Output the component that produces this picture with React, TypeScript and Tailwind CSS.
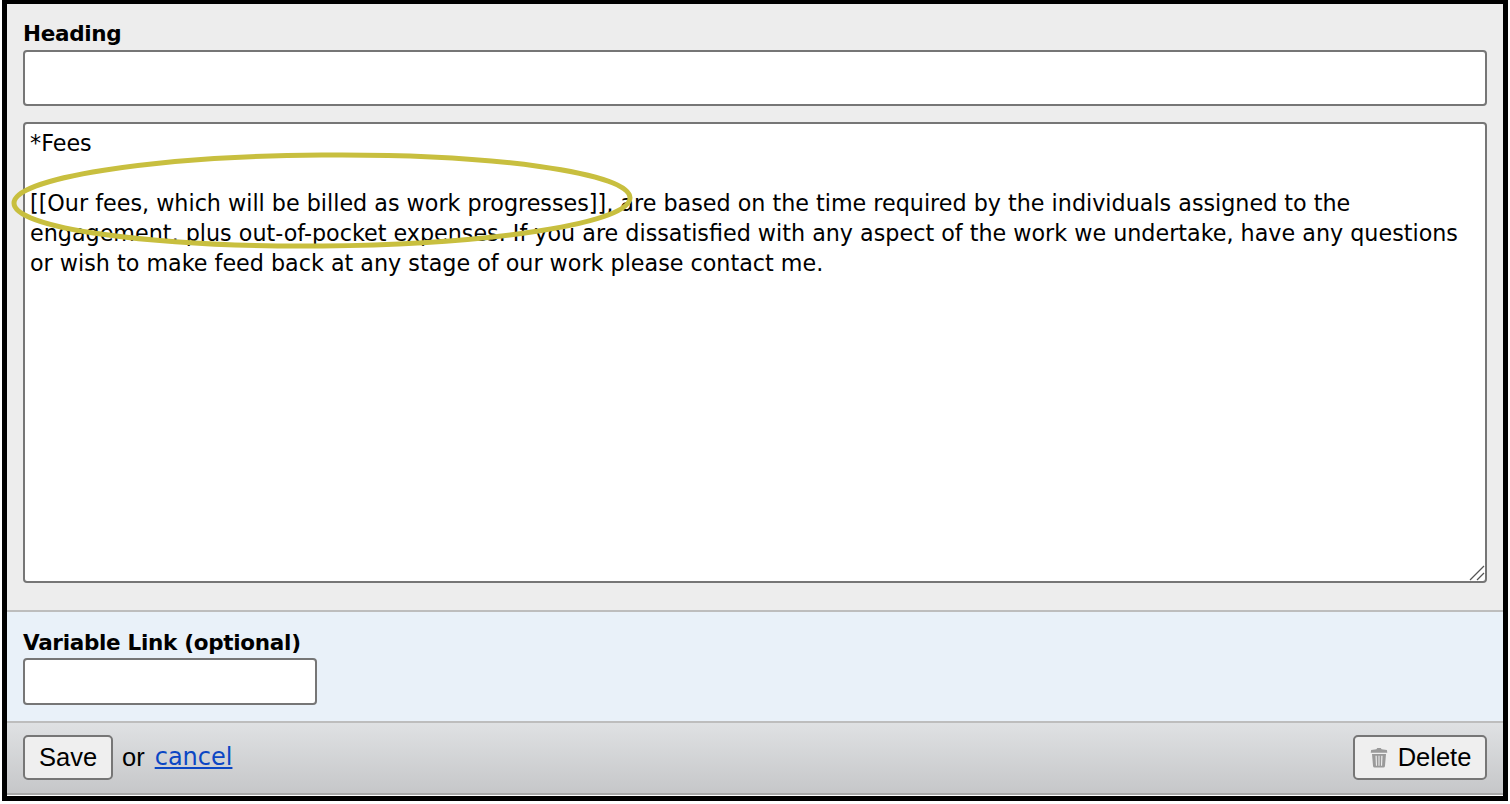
export default function App() {
  return (
    <div className="relative h-[804px] w-[1510px] overflow-hidden bg-white pb-[3px] pl-[2px] pr-[2px] font-['DejaVu_Sans',sans-serif] text-black">
      <div className="flex h-full flex-col border-[5px] border-t-[4px] border-black">
        {/* Main fields */}
        <div className="h-[608px] border-b-2 border-[#bdbdbd] bg-[#ededed] px-[16px] pt-[14px]">
          <label className="block text-[21.5px] leading-[32px] font-bold tracking-[-0.3px]">Heading</label>
          <input className="block h-[56px] w-[1464px] rounded-[4px] border-2 border-[#767676] bg-white" />
          <div className="relative mt-[16px] h-[461px] w-[1464px] rounded-[4px] border-2 border-[#767676] bg-white px-[5px] pt-[4px] text-[22.25px] leading-[30px]">
            <p>*Fees</p>
            <p className="mt-[30px]">
              [[Our fees, which will be billed as work progresses]], are based on the time required by the individuals assigned to the engagement, plus out-of-pocket expenses. If you are dissatisfied with any aspect of the work we undertake, have any questions or wish to make feed back at any stage of our work please contact me.
            </p>
            <svg className="absolute right-0 bottom-0 h-[16px] w-[16px]" viewBox="0 0 16 16" fill="none" stroke="#555" strokeWidth="1.2">
              <path d="M1 15 L15 1" />
              <path d="M8 15 L15 8" />
            </svg>
          </div>
        </div>

        {/* Variable link */}
        <div className="h-[111px] border-b-2 border-[#bdbdbd] bg-[#e9f1f9] px-[16px] pt-[16px]">
          <label className="block text-[21.5px] leading-[30px] font-bold tracking-[-0.3px]">Variable Link (optional)</label>
          <input className="block h-[47px] w-[294px] rounded-[4px] border-2 border-[#767676] bg-white" />
        </div>

        {/* Footer */}
        <div className="flex h-[72px] items-center justify-between border-b-2 border-[#a9a9a9] bg-linear-to-b from-[#dfe1e3] to-[#c6c7c9] px-[16px] pb-[2px] font-['Liberation_Sans',sans-serif] text-[25.5px]">
          <div className="flex items-center">
            <button className="h-[45px] w-[90px] rounded-[5px] border-2 border-[#767676] bg-[#efefef]">Save</button>
            <span className="ml-[9px]">or</span>
            <a href="#" className="ml-[10px] font-['DejaVu_Sans',sans-serif] text-[24px] text-[#0b46c4] underline">cancel</a>
          </div>
          <button className="flex h-[45px] w-[134px] items-center justify-center gap-[9px] rounded-[5px] border-2 border-[#767676] bg-[#efefef]">
            <svg className="h-[21px] w-[20px]" viewBox="0 0 21 24" fill="#9a9a9a">
              <path d="M7.5 2.5 L8.5 1 L12.5 1 L13.5 2.5 L19.5 3.5 L20 6.5 L1 6.5 L1.5 3.5 Z" />
              <path fillRule="evenodd" d="M2.5 8 L18.5 8 L17.3 22 Q17 23.5 15.5 23.5 L5.5 23.5 Q4 23.5 3.7 22 Z M6.5 10 L7 21.5 L8.2 21.5 L7.9 10 Z M9.9 10 L9.9 21.5 L11.1 21.5 L11.1 10 Z M13.1 10 L12.8 21.5 L14 21.5 L14.5 10 Z" />
            </svg>
            Delete
          </button>
        </div>
      </div>

      {/* Annotation ellipse */}
      <svg className="pointer-events-none absolute top-0 left-0 h-[804px] w-[1510px]" viewBox="0 0 1510 804" fill="none">
        <ellipse cx="322" cy="200.5" rx="308" ry="45.5" stroke="#c8bf3f" strokeWidth="5" transform="rotate(-0.5 322 200.5)" />
      </svg>
    </div>
  );
}
